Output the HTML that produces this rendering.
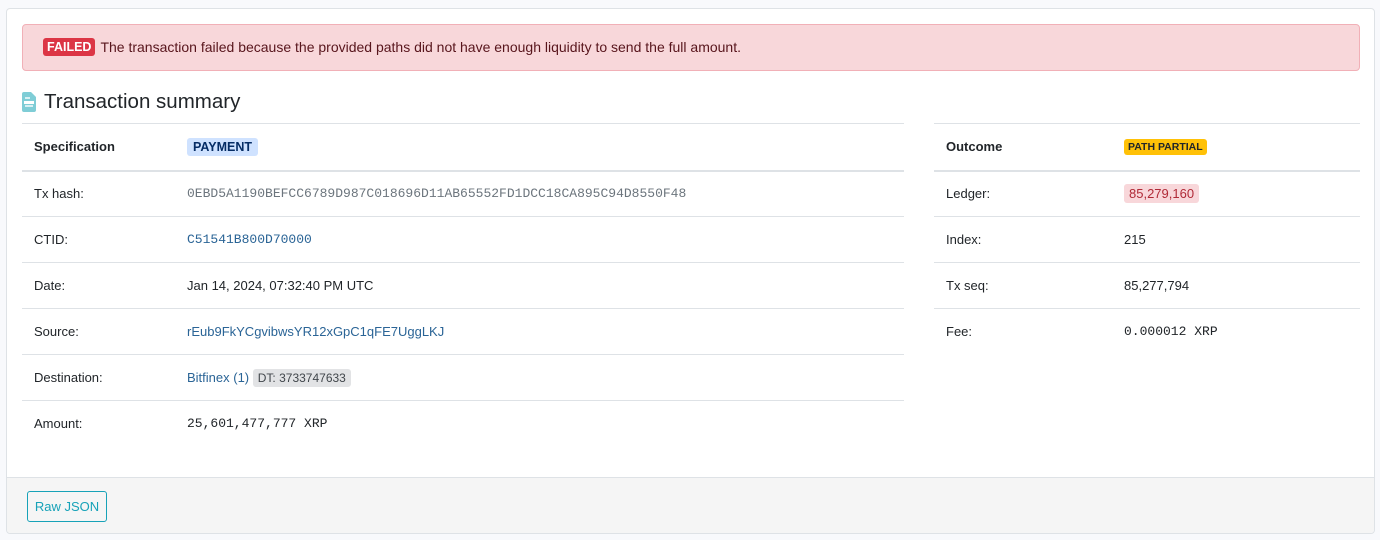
<!DOCTYPE html>
<html><head><style>
*{box-sizing:border-box;margin:0;padding:0}
body{width:1380px;height:540px;background:#f8f9fc;font-family:"Liberation Sans",sans-serif;font-size:13px;color:#212529;position:relative;overflow:hidden}
.card{position:absolute;left:6px;top:8px;width:1369px;height:526px;background:#fff;border:1px solid #dee2e6;border-radius:4px;overflow:hidden}
.alert{position:absolute;left:15px;top:15px;width:1338px;height:47px;background:#f8d7da;border:1px solid #f1b0b7;border-radius:4px;color:#58151c;padding:13px 20px;font-size:14px}
.failed{display:inline-block;background:#dc3545;color:#fff;font-weight:bold;font-size:12.5px;padding:2px 4px;border-radius:3px;margin-right:5px;vertical-align:1px}
h2{position:absolute;left:15px;top:80px;font-size:20.5px;font-weight:normal;color:#212529;display:flex;align-items:center}
table{position:absolute;border-collapse:collapse;top:114px}
td{height:46px;padding:0 12px;border-top:1px solid #dee2e6;vertical-align:middle}
tr.h td{height:47px;font-weight:bold;border-top:1px solid #dee2e6;border-bottom:2px solid #dee2e6}
.mono{font-family:"Liberation Mono",monospace;font-size:13px}
.lnk{color:#2a6496}
.b{display:inline-block;border-radius:3px}
.footer{position:absolute;left:0;top:468px;width:100%;height:58px;background:#f5f5f5;border-top:1px solid #dee2e6}
.btn{position:absolute;left:20px;top:13px;width:80px;height:31px;border:1px solid #17a2b8;border-radius:3px;color:#17a2b8;font-size:13px;text-align:center;line-height:29px}
</style></head><body>
<div class="card">
<div class="alert"><span class="failed">FAILED</span>The transaction failed because the provided paths did not have enough liquidity to send the full amount.</div>
<h2 style="top:81px"><svg width="14" height="20" viewBox="0 0 14 20" style="margin-right:8px"><path d="M0 2a2 2 0 0 1 2-2h7l5 5v13a2 2 0 0 1-2 2H2a2 2 0 0 1-2-2z" fill="#7fcdd6"/><rect x="2" y="9" width="10" height="3" fill="#fff"/><rect x="3" y="13" width="8" height="2" fill="#fff" opacity=".7"/><rect x="3" y="5" width="5" height="2" fill="#fff" opacity=".7"/></svg>Transaction summary</h2>
<table style="left:15px;width:882px">
<tr class="h"><td style="width:153px">Specification</td><td><span class="b" style="background:#cfe2ff;color:#052c65;padding:2px 6px;font-size:12.5px">PAYMENT</span></td></tr>
<tr><td>Tx hash:</td><td class="mono" style="color:#6c757d">0EBD5A1190BEFCC6789D987C018696D11AB65552FD1DCC18CA895C94D8550F48</td></tr>
<tr><td>CTID:</td><td class="mono lnk">C51541B800D70000</td></tr>
<tr><td>Date:</td><td>Jan 14, 2024, 07:32:40 PM UTC</td></tr>
<tr><td>Source:</td><td class="lnk">rEub9FkYCgvibwsYR12xGpC1qFE7UggLKJ</td></tr>
<tr><td style="border-bottom:1px solid #dee2e6">Destination:</td><td style="border-bottom:1px solid #dee2e6"><span class="lnk">Bitfinex (1)</span> <span class="b" style="background:#e2e3e5;color:#41464b;padding:2px 5px;font-size:12px">DT: 3733747633</span></td></tr>
<tr><td style="border:0">Amount:</td><td class="mono" style="border:0">25,601,477,777 XRP</td></tr>
</table>
<table style="left:927px;width:426px">
<tr class="h"><td style="width:178px">Outcome</td><td><span class="b" style="background:#ffc107;color:#212529;padding:2px 4px;font-size:10.5px">PATH PARTIAL</span></td></tr>
<tr><td>Ledger:</td><td><span class="b" style="background:#f8d7da;color:#b02a37;padding:2px 5px">85,279,160</span></td></tr>
<tr><td>Index:</td><td>215</td></tr>
<tr><td>Tx seq:</td><td>85,277,794</td></tr>
<tr><td>Fee:</td><td class="mono">0.000012 XRP</td></tr>
</table>
<div class="footer"><div class="btn">Raw JSON</div></div>
</div>
</body></html>
